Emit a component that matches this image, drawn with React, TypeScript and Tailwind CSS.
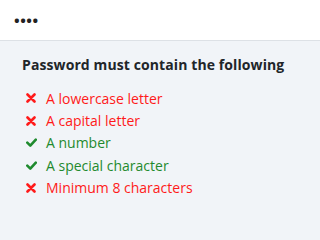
import React from 'react';

const Cross = () => (
  <svg className="w-[10px] h-[10px] shrink-0" viewBox="0 0 10 10">
    <path d="M1.5 1.5l7 7M8.5 1.5l-7 7" stroke="currentColor" strokeWidth={2.6} strokeLinecap="round" fill="none" />
  </svg>
);

const Check = () => (
  <svg className="w-[11px] h-[9px] shrink-0" viewBox="0 0 11 9">
    <path d="M1.3 4.6l3 3L9.8 1.6" stroke="currentColor" strokeWidth={2.6} strokeLinecap="round" strokeLinejoin="round" fill="none" />
  </svg>
);

const rules = [
  { label: 'A lowercase letter', ok: false },
  { label: 'A capital letter', ok: false },
  { label: 'A number', ok: true },
  { label: 'A special character', ok: true },
  { label: 'Minimum 8 characters', ok: false },
];

export default function App() {
  return (
    <div className="w-full min-h-screen overflow-hidden bg-[#f1f4f8]" style={{ fontFamily: '"Open Sans", "Liberation Sans", sans-serif' }}>
      <div className="h-[41px] bg-white border-b border-[#dde1e6] flex items-center pl-[14px]">
        <span className="text-[#222] text-[15px] font-bold tracking-[0.5px] leading-none">••••</span>
      </div>
      <div className="pl-[22px] pt-[14px]">
        <h3 className="text-[14px] font-bold text-[#212529] leading-[20px] mb-[12px] tracking-[0.1px]">Password must contain the following</h3>
        <ul className="flex flex-col">
          {rules.map((r) => (
            <li
              key={r.label}
              className={`flex items-center h-[22.4px] text-[14px] ${r.ok ? 'text-[#1f8a2e]' : 'text-[#ff1a1a]'}`}
            >
              <span className="w-[24px] pl-[4px] flex items-center">{r.ok ? <Check /> : <Cross />}</span>
              <span>{r.label}</span>
            </li>
          ))}
        </ul>
      </div>
    </div>
  );
}
